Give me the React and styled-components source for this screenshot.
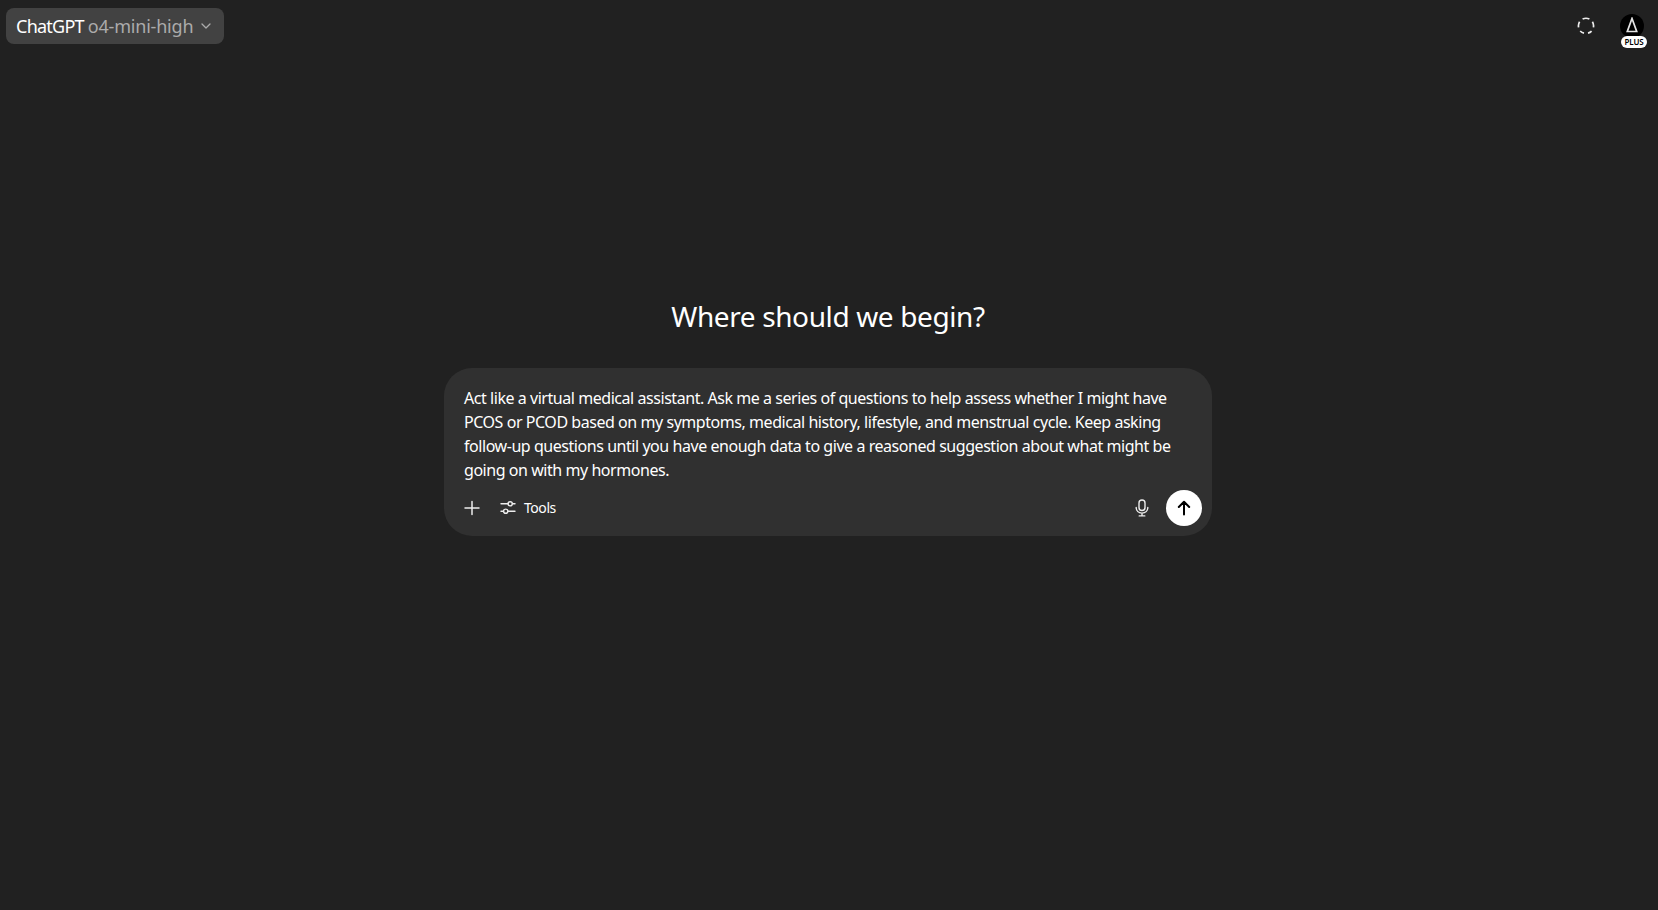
import React from "react";
import styled, { createGlobalStyle } from "styled-components";

const GlobalStyle = createGlobalStyle`
  html, body {
    margin: 0;
    padding: 0;
    height: 100%;
    background: #212121;
  }
  body {
    font-family: "Noto Sans", "Open Sans", "Liberation Sans", sans-serif;
    color: #fff;
    overflow: hidden;
  }
`;

const Page = styled.div`
  width: 100%;
  height: 910px;
  display: flex;
  flex-direction: column;
  background: #212121;
`;

const TopBar = styled.header`
  height: 52px;
  box-sizing: border-box;
  padding: 8px 14px 0 6px;
  display: flex;
  justify-content: space-between;
  align-items: flex-start;
`;

const ModelButton = styled.button`
  height: 36px;
  width: 218px;
  box-sizing: border-box;
  padding: 0 0 0 10px;
  display: flex;
  align-items: center;
  gap: 7px;
  border: 0;
  border-radius: 8px;
  background: #424242;
  color: #fff;
  font: inherit;
  font-size: 18px;
  letter-spacing: -0.75px;
  white-space: nowrap;
`;

const ModelName = styled.span`
  color: #ababab;
  letter-spacing: -0.2px;
`;

const TopActions = styled.div`
  display: flex;
  align-items: flex-start;
  gap: 25px;
`;

const DashedIcon = styled.svg`
  width: 18px;
  height: 18px;
  margin-top: 9px;
  color: #ececec;
`;

const Avatar = styled.div`
  position: relative;
  width: 24px;
  height: 24px;
  margin-top: 6px;
  border-radius: 50%;
  background: #000;
  display: flex;
  align-items: flex-start;
  justify-content: center;
`;

const TriangleMark = styled.svg`
  margin-top: 3px;
`;

const PlusBadge = styled.span`
  position: absolute;
  left: 1px;
  top: 22px;
  width: 26px;
  height: 12px;
  border-radius: 6px;
  background: #fff;
  color: #000;
  font-size: 8px;
  font-weight: 600;
  line-height: 12px;
  letter-spacing: -0.2px;
  text-align: center;
`;

const Main = styled.main`
  display: flex;
  flex-direction: column;
  align-items: center;
  padding: 243px 2px 0 0;
`;

const Heading = styled.h1`
  margin: 0 0 32px;
  padding-top: 1px;
  font-size: 28px;
  font-weight: 400;
  line-height: 40px;
  letter-spacing: -0.38px;
  color: #fff;
`;

const Composer = styled.section`
  width: 768px;
  height: 168px;
  box-sizing: border-box;
  padding: 18px 10px 10px 20px;
  display: flex;
  flex-direction: column;
  justify-content: space-between;
  border-radius: 28px;
  background: #303030;
`;

const Prompt = styled.p`
  margin: 0;
  width: 720px;
  font-size: 16px;
  line-height: 24px;
  letter-spacing: -0.45px;
  color: #fff;
`;

const Controls = styled.div`
  display: flex;
  align-items: center;
  justify-content: space-between;
`;

const ControlGroup = styled.div`
  display: flex;
  align-items: center;
  gap: ${(p) => p.$gap}px;
  margin-left: ${(p) => p.$shift || 0}px;
`;

const ToolsLabel = styled.span`
  display: flex;
  align-items: center;
  gap: 8px;
  font-size: 14px;
  line-height: 16px;
  letter-spacing: -0.45px;
  color: #fff;
`;

const SendButton = styled.button`
  width: 36px;
  height: 36px;
  padding: 0;
  display: flex;
  align-items: center;
  justify-content: center;
  border: 0;
  border-radius: 50%;
  background: #fff;
  color: #000;
`;

const Chevron = () => (
  <svg width="12" height="12" viewBox="0 0 12 12" fill="none" stroke="#ababab" strokeWidth="1.3" strokeLinecap="round" strokeLinejoin="round">
    <path d="M2 4l4 4 4-4" />
  </svg>
);

const PlusIcon = () => (
  <svg width="18" height="18" viewBox="0 0 18 18" fill="none" stroke="#ececec" strokeWidth="1.5" strokeLinecap="round">
    <path d="M9 2.5v13M2 9h14" />
  </svg>
);

const SlidersIcon = () => (
  <svg width="16" height="16" viewBox="0 0 16 16" fill="none" stroke="#ececec" strokeWidth="1.4" strokeLinecap="round">
    <path d="M1 3.8h7M12.5 3.8h2.5M1 11.2h2.5M8 11.2h7" />
    <circle cx="10.2" cy="3.8" r="2.1" />
    <circle cx="5.7" cy="11.2" r="2.1" />
  </svg>
);

const MicIcon = () => (
  <svg width="16" height="18" viewBox="0 0 16 18" fill="none" stroke="#ececec" strokeWidth="1.4" strokeLinecap="round">
    <rect x="5" y="1" width="6" height="10.5" rx="3" />
    <path d="M2.2 8.5c0 3.4 2.4 5.6 5.8 5.6s5.8-2.2 5.8-5.6M8 14.1v2.6M5.2 16.9h5.6" />
  </svg>
);

const ArrowIcon = () => (
  <svg width="16" height="16" viewBox="0 0 16 16" fill="none" stroke="#000" strokeWidth="2" strokeLinecap="round" strokeLinejoin="round">
    <path d="M8 14.5V1.8M2.8 7L8 1.8 13.2 7" />
  </svg>
);

function App() {
  return (
    <Page>
      <GlobalStyle />
      <TopBar>
        <ModelButton>
          <span>ChatGPT <ModelName>o4-mini-high</ModelName></span>
          <Chevron />
        </ModelButton>
        <TopActions>
          <DashedIcon viewBox="0 0 18 18" fill="none" stroke="currentColor" strokeWidth="1.7">
            <path d="M5.6 2.1A7.6 7.6 0 0 1 12.4 2.1M15.4 4.8A7.6 7.6 0 0 1 16.4 10.4M14.6 14.2A7.6 7.6 0 0 1 11 16.2M7 16.2A7.6 7.6 0 0 1 3.2 14M1.6 10.4A7.6 7.6 0 0 1 2.6 4.8" />
          </DashedIcon>
          <Avatar>
            <TriangleMark width="12" height="16" viewBox="0 0 12 16" fill="none" stroke="#e4e4e4" strokeWidth="1.7">
              <path d="M6 1.5L1.3 14.5h9.4z" />
            </TriangleMark>
            <PlusBadge>PLUS</PlusBadge>
          </Avatar>
        </TopActions>
      </TopBar>
      <Main>
        <Heading>Where should we begin?</Heading>
        <Composer>
          <Prompt>
            Act like a virtual medical assistant. Ask me a series of questions to help assess whether I might have
            PCOS or PCOD based on my symptoms, medical history, lifestyle, and menstrual cycle. Keep asking
            follow-up questions until you have enough data to give a reasoned suggestion about what might be
            going on with my hormones.
          </Prompt>
          <Controls>
            <ControlGroup $gap={19} $shift={-1}>
              <PlusIcon />
              <ToolsLabel>
                <SlidersIcon />
                Tools
              </ToolsLabel>
            </ControlGroup>
            <ControlGroup $gap={16}>
              <MicIcon />
              <SendButton>
                <ArrowIcon />
              </SendButton>
            </ControlGroup>
          </Controls>
        </Composer>
      </Main>
    </Page>
  );
}

export default App;
